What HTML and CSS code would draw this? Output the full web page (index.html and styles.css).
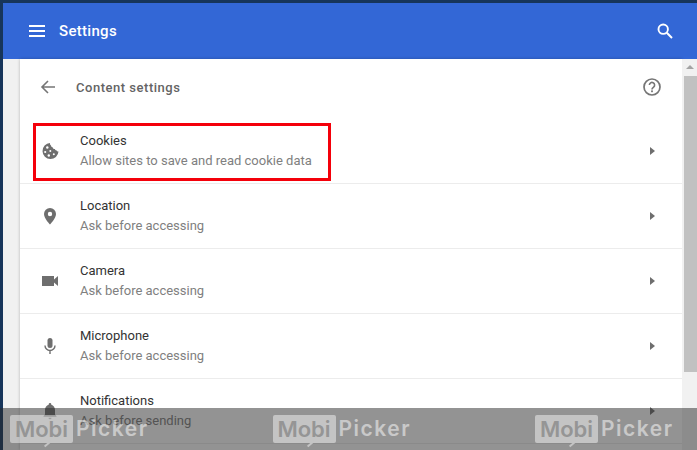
FILE: index.html
```html
<!DOCTYPE html>
<html lang="en">
<head>
<meta charset="utf-8">
<title>Settings</title>
<link rel="stylesheet" href="styles.css">
</head>
<body>
<div class="window">
  <header class="topbar">
    <svg class="menu-icon" viewBox="0 0 16 12" width="16" height="12"><path d="M0 0h16v2H0zM0 5h16v2H0zM0 10h16v2H0z" fill="#fff"/></svg>
    <span class="app-title">Settings</span>
    <svg class="search-icon" viewBox="0 0 16 16" width="16" height="16"><circle cx="6.2" cy="6.2" r="4.7" fill="none" stroke="#fff" stroke-width="1.9"/><path d="M9.8 9.8 15 15" stroke="#fff" stroke-width="2" fill="none"/></svg>
  </header>
  <div class="main">
    <div class="gutter"></div>
    <section class="card">
      <div class="page-head">
        <svg class="back-icon" viewBox="0 0 16 16" width="16" height="16"><path d="M15 8H2M8 2 2 8l6 6" fill="none" stroke="#757575" stroke-width="1.6"/></svg>
        <h1 class="page-title">Content settings</h1>
        <svg class="help-icon" viewBox="0 0 20 20" width="20" height="20"><circle cx="10" cy="10" r="8" fill="none" stroke="#757575" stroke-width="1.7"/><path d="M7.4 8.1a2.6 2.6 0 1 1 4.2 2c-.9.7-1.6 1.1-1.6 2.3" fill="none" stroke="#757575" stroke-width="1.6"/><rect x="9.1" y="13.4" width="1.8" height="1.8" fill="#757575"/></svg>
      </div>
      <div class="row">
        <svg class="row-icon" viewBox="0 0 18 18" width="18" height="18"><path d="M9 1a8 8 0 1 0 8.500 8.500c-.9.100-1.500-.4-1.700-1.100-1 .2-1.800-.4-1.900-1.300-1.100.1-1.900-.6-2-1.700C10.800 5.100 10.100 4.400 10 3.400 9.200 3 8.800 1.900 9 1z" fill="#6e6e6e"/><g fill="#fff"><circle cx="6.300" cy="5.500" r="1.200"/><circle cx="4.200" cy="10" r="1.100"/><circle cx="9.300" cy="9" r="1"/><circle cx="7.800" cy="13.500" r="1.200"/><circle cx="12.800" cy="12.300" r="1"/></g></svg>
        <div class="row-text"><div class="row-name">Cookies</div><div class="row-sub">Allow sites to save and read cookie data</div></div>
        <span class="chevron"></span>
        <div class="highlight"></div>
      </div>
      <div class="row">
        <svg class="row-icon" viewBox="0 0 18 18" width="18" height="18"><path d="M9 1a6 6 0 0 0-6 6c0 4.500 6 10.500 6 10.500S15 11.500 15 7a6 6 0 0 0-6-6zm0 8.200A2.200 2.200 0 1 1 9 4.800a2.200 2.200 0 0 1 0 4.400z" fill="#6e6e6e"/></svg>
        <div class="row-text"><div class="row-name">Location</div><div class="row-sub">Ask before accessing</div></div>
        <span class="chevron"></span>
      </div>
      <div class="row">
        <svg class="row-icon" viewBox="0 0 18 18" width="18" height="18"><path d="M1 4h12v3.500L17 4v10l-4-3.500V14H1z" fill="#6e6e6e"/></svg>
        <div class="row-text"><div class="row-name">Camera</div><div class="row-sub">Ask before accessing</div></div>
        <span class="chevron"></span>
      </div>
      <div class="row">
        <svg class="row-icon" viewBox="0 0 18 18" width="18" height="18"><rect x="6.500" y="1" width="5" height="10" rx="2.500" fill="#6e6e6e"/><path d="M4 8.500a5 5 0 0 0 10 0M9 13.500V17" fill="none" stroke="#6e6e6e" stroke-width="1.400"/></svg>
        <div class="row-text"><div class="row-name">Microphone</div><div class="row-sub">Ask before accessing</div></div>
        <span class="chevron"></span>
      </div>
      <div class="row">
        <svg class="row-icon" viewBox="0 0 18 18" width="18" height="18"><path d="M9 1c-.8 0-1.300.6-1.300 1.300v.5C5.300 3.400 4 5.500 4 8v4.500L2.500 14v.8h13V14L14 12.500V8c0-2.500-1.300-4.600-3.700-5.200v-.5C10.300 1.600 9.800 1 9 1zM7.500 15.800a1.500 1.500 0 0 0 3 0z" fill="#6e6e6e"/></svg>
        <div class="row-text"><div class="row-name">Notifications</div><div class="row-sub">Ask before sending</div></div>
        <span class="chevron"></span>
      </div>
    </section>
    <div class="scrollbar">
      <div class="scroll-up"></div>
      <div class="scroll-thumb"></div>
    </div>
  </div>
  <div class="watermark">
    <div class="wm"><span class="wm-box">Mobi</span><span class="wm-text">Picker</span></div>
    <div class="wm"><span class="wm-box">Mobi</span><span class="wm-text">Picker</span></div>
    <div class="wm"><span class="wm-box">Mobi</span><span class="wm-text">Picker</span></div>
  </div>
</div>
</body>
</html>
```
FILE: styles.css
```css
* { box-sizing: border-box; }
html, body { margin: 0; padding: 0; }
body { width: 697px; height: 450px; overflow: hidden; font-family: Roboto, "Liberation Sans", sans-serif; background: #17355a; }
.window { position: relative; height: 450px; padding: 3px 0 0 3px; overflow: hidden; }
.topbar { height: 56px; background: #3367d6; display: flex; align-items: center; padding: 0 24px 0 26px; color: #fff; }
.menu-icon { margin-right: 14px; }
.app-title { font-size: 15px; font-weight: 500; flex: 1; letter-spacing: .3px; }
.main { display: flex; height: 391px; background: #f1f1f1; }
.gutter { width: 17px; flex: none; }
.card { width: 662px; flex: none; background: #fff; box-shadow: 0 0 3px rgba(0,0,0,.25); }
.page-head { height: 60px; display: flex; align-items: center; padding: 0 20px 4px 20px; }
.back-icon { margin-right: 20px; }
.page-title { flex: 1; margin: 0; font-size: 13px; font-weight: 500; color: #646464; letter-spacing: .52px; }
.row { position: relative; height: 65px; display: flex; align-items: center; padding: 0 27px 0 21px; border-bottom: 1px solid #ececec; }
.row-icon { flex: none; margin-right: 21px; }
.row-text { flex: 1; }
.row-name { font-size: 13px; line-height: 20px; color: #333; }
.row-sub { font-size: 13px; line-height: 20px; color: #808080; }
.chevron { width: 0; height: 0; border-left: 5px solid #6e6e6e; border-top: 4.500px solid transparent; border-bottom: 4.500px solid transparent; }
.highlight { position: absolute; left: 13px; top: 4px; width: 298px; height: 58px; border: 3px solid #f4000a; }
.scrollbar { width: 15px; flex: none; background: #f1f1f1; }
.scroll-up { height: 17px; position: relative; }
.scroll-up::after { content: ""; position: absolute; left: 4px; top: 6px; border-left: 4px solid transparent; border-right: 4px solid transparent; border-bottom: 4px solid #a3a3a3; }
.scroll-thumb { height: 296px; margin-left: 2px; background: #c1c1c1; }
.watermark { position: absolute; left: 0; right: 0; top: 408px; height: 42px; background: rgba(40,40,40,.5); display: flex; padding: 7px 0 0 10px; }
.wm { flex: none; width: 262.500px; display: flex; align-items: flex-start; }
.wm-box { position: relative; width: 63px; height: 28px; background: rgba(255,255,255,.46); border-radius: 2px; font-family: Inter, sans-serif; font-weight: 600; font-size: 22px; line-height: 28px; color: #959595; text-align: center; }
.wm-box::after { content: ""; position: absolute; left: 33px; top: 26px; width: 14px; height: 2px; background: #c4c4c4; transform: rotate(-40deg); }
.wm-text { margin-left: 3px; font-family: Inter, sans-serif; font-weight: 600; font-size: 21px; line-height: 28px; color: rgba(255,255,255,.5); letter-spacing: 1.500px; }
```
